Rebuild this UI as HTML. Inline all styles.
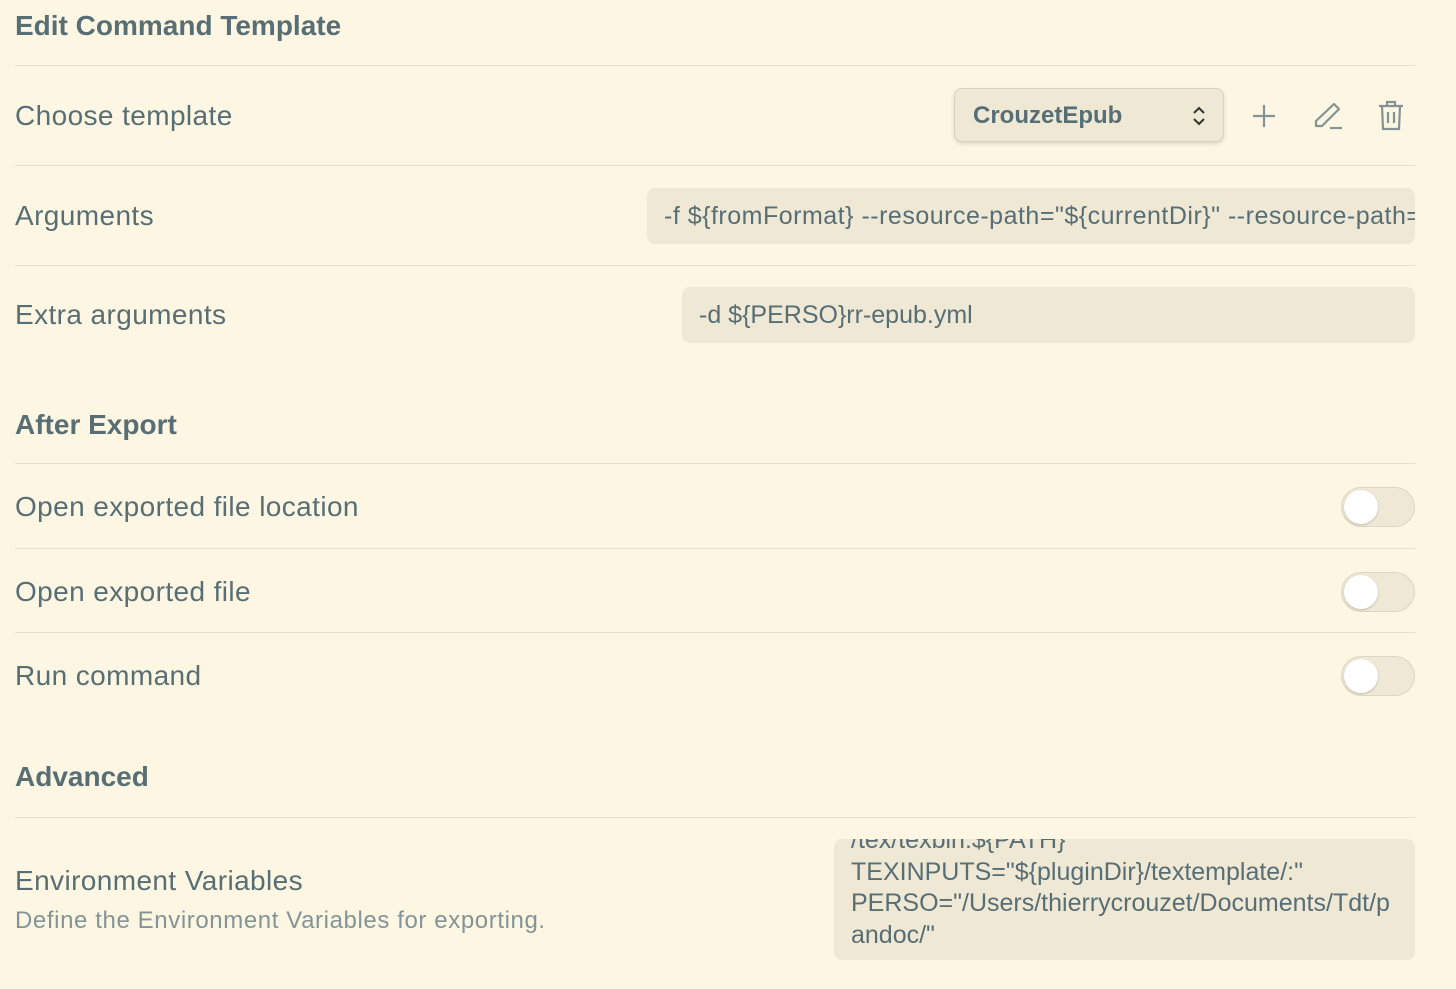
<!DOCTYPE html>
<html><head><meta charset="utf-8"><style>
body{margin:0;width:1456px;height:989px;background:#fdf6e3;font-family:"Liberation Sans",sans-serif;color:#586e75;position:relative;overflow:hidden}
.a{position:absolute;white-space:nowrap}
.h{font-weight:bold;font-size:28px}
.l{font-size:28px;letter-spacing:0.4px}
.hr{position:absolute;left:15px;width:1400px;height:1px;background:#e6dfcb}
.in{position:absolute;background:#eee8d5;border-radius:8px;font-size:25px;letter-spacing:0.3px;line-height:56px;padding-left:17px;box-sizing:border-box;overflow:hidden;white-space:nowrap}
.tg{position:absolute;left:1341px;width:74px;height:40px;border-radius:20px;background:#eee8d5;border:1px solid #ddd6c1;box-sizing:border-box}
.tg:after{content:"";position:absolute;left:2px;top:2px;width:34px;height:34px;border-radius:50%;background:#fff;box-shadow:0 1px 2px rgba(0,0,0,.2)}
</style></head><body>
<div class="a h" style="left:15px;top:10px">Edit Command Template</div>
<div class="hr" style="top:65px"></div>
<div class="a l" style="left:15px;top:100px">Choose template</div>
<div style="position:absolute;left:954px;top:88px;width:270px;height:54px;border-radius:8px;background:#eee8d5;border:1px solid #d8d1bd;box-sizing:border-box;box-shadow:0 2px 4px rgba(0,0,0,.12)">
<div class="a" style="left:18px;top:13px;font-size:24px;font-weight:bold;color:#586e75">CrouzetEpub</div>
<svg class="a" style="left:236px;top:16px" width="16" height="22" viewBox="0 0 16 22"><path d="M3 8l5-5 5 5M3 14l5 5 5-5" fill="none" stroke="#333" stroke-width="2"/></svg></div>
<svg class="a" style="left:1251px;top:103px" width="26" height="26"><path d="M13 2v22M2 13h22" stroke="#839496" stroke-width="2.2"/></svg>
<svg class="a" style="left:1312px;top:101px" width="32" height="30" viewBox="0 0 32 30"><path d="M22 3l5 5L10 25H4v-5z" fill="none" stroke="#839496" stroke-width="2.2" stroke-linejoin="round"/><path d="M18 27h12" stroke="#839496" stroke-width="2.2"/></svg>
<svg class="a" style="left:1377px;top:100px" width="28" height="32" viewBox="0 0 28 32"><path d="M2 6h24M10 6V2h8v4M5 6l1 23h16l1-23M11 12v11M17 12v11" fill="none" stroke="#839496" stroke-width="2.2"/></svg>
<div class="hr" style="top:165px"></div>
<div class="a l" style="left:15px;top:200px">Arguments</div>
<div class="in" style="left:647px;top:188px;width:768px;letter-spacing:0.5px">-f ${fromFormat} --resource-path="${currentDir}" --resource-path="${attachmentFolderPath}"</div>
<div class="hr" style="top:265px"></div>
<div class="a l" style="left:15px;top:299px">Extra arguments</div>
<div class="in" style="left:682px;top:287px;width:733px;letter-spacing:0">-d ${PERSO}rr-epub.yml</div>
<div class="a h" style="left:15px;top:409px">After Export</div>
<div class="hr" style="top:463px"></div>
<div class="a l" style="left:15px;top:491px">Open exported file location</div>
<div class="tg" style="top:487px"></div>
<div class="hr" style="top:548px"></div>
<div class="a l" style="left:15px;top:576px">Open exported file</div>
<div class="tg" style="top:572px"></div>
<div class="hr" style="top:632px"></div>
<div class="a l" style="left:15px;top:660px">Run command</div>
<div class="tg" style="top:656px"></div>
<div class="a h" style="left:15px;top:761px">Advanced</div>
<div class="hr" style="top:817px"></div>
<div class="a l" style="left:15px;top:865px">Environment Variables</div>
<div class="a" style="left:15px;top:907px;font-size:24px;letter-spacing:0.6px;color:#839496">Define the Environment Variables for exporting.</div>
<div style="position:absolute;left:834px;top:839px;width:581px;height:121px;background:#eee8d5;border-radius:8px;overflow:hidden">
<div class="a" style="left:17px;top:-14px;font-size:25px;line-height:31.5px;white-space:nowrap">/tex/texbin:${PATH}<br>TEXINPUTS="${pluginDir}/textemplate/:"<br>PERSO="/Users/thierrycrouzet/Documents/Tdt/p<br>andoc/"</div></div>
</body></html>
